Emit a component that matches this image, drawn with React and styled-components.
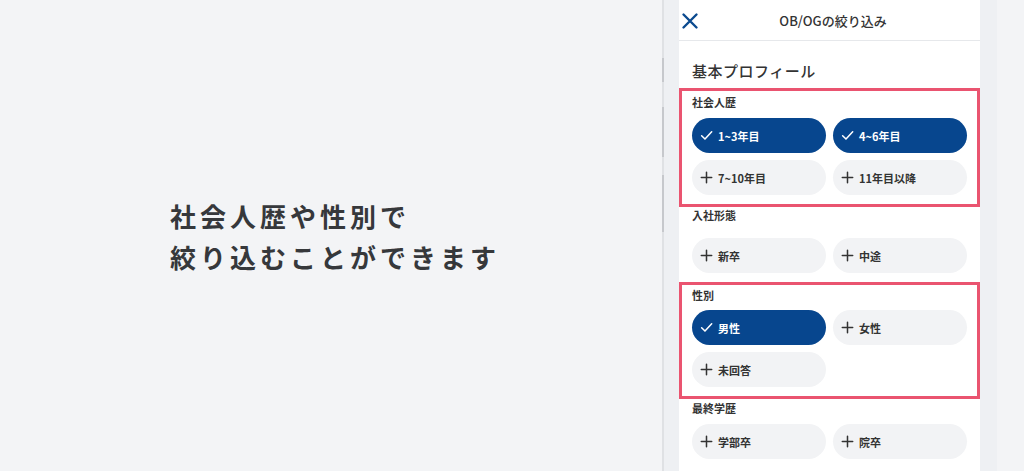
import React from 'react';
import styled, { createGlobalStyle } from 'styled-components';

const GlobalStyle = createGlobalStyle`
  html, body {
    margin: 0;
    padding: 0;
    background: #f3f4f6;
    font-family: "Noto Sans CJK JP", "Noto Sans", sans-serif;
  }
`

const Page = styled.div`
  display: flex;
  height: 471px;
  overflow: hidden;
  background: #f3f4f6;
`

const Intro = styled.div`
  width: 662px;
  box-sizing: border-box;
  padding-left: 170px;
  display: flex;
  align-items: center;
`

const Headline = styled.h1`
  margin: 0;
  font-size: 26px;
  font-weight: 700;
  line-height: 41px;
  letter-spacing: 4px;
  color: #36383b;
`

const Phone = styled.div`
  position: relative;
  width: 335px;
  box-sizing: border-box;
  height: 100%;
  padding: 0 16px 0 15px;
  background: #eef0f3;
  border-left: 2px solid #dfe1e4;
`

const SideButton = styled.span`
  position: absolute;
  left: -2px;
  width: 2px;
  background: #c6c8cc;
`

const Screen = styled.div`
  width: 301px;
  height: 100%;
  background: #fff;
`

const Header = styled.div`
  position: relative;
  height: 40px;
  display: flex;
  align-items: center;
  justify-content: center;
  border-bottom: 1px solid #e6e8eb;
`

const CloseButton = styled.button`
  position: absolute;
  left: 2px;
  top: 12px;
  width: 18px;
  height: 18px;
  padding: 0;
  border: none;
  background: none;
  display: flex;
`

const Title = styled.div`
  font-size: 13px;
  font-weight: 500;
  color: #333;
  padding-left: 7px;
`

const Body = styled.div`
  padding-top: 20px;
`

const GroupTitle = styled.div`
  padding: 0 13px;
  margin-bottom: 7px;
  font-size: 15px;
  line-height: 20px;
  font-weight: 500;
  color: #333;
  letter-spacing: 0.5px;
`

const Section = styled.div`
  padding: ${({ $top }) => $top}px 13px ${({ $bottom }) => $bottom}px;
  ${({ $boxed }) => $boxed && `
    box-shadow: inset 0 0 0 3px #ea5470;
  `}
`

const Label = styled.div`
  font-size: 11px;
  line-height: 14px;
  font-weight: 700;
  color: #333;
  margin-bottom: ${({ $gap }) => $gap}px;
`

const ChipGrid = styled.div`
  display: grid;
  grid-template-columns: 134px 134px;
  gap: 7px;
`

const Chip = styled.button`
  height: 35px;
  border: none;
  border-radius: 18px;
  padding: 0 0 0 8px;
  display: flex;
  align-items: center;
  gap: 5px;
  font-family: inherit;
  font-size: 11px;
  font-weight: 700;
  background: #f2f3f5;
  color: #333;
  ${({ $active }) => $active && `
    background: #07468e;
    color: #fff;
  `}
`

const CheckIcon = () => (
  <svg width="13" height="13" viewBox="0 0 12 12" fill="none">
    <polyline points="1.5,6.2 4.6,9.3 10.8,2.6" stroke="#fff" strokeWidth="1.4" strokeLinecap="round" strokeLinejoin="round" />
  </svg>
)

const PlusIcon = () => (
  <svg width="13" height="13" viewBox="0 0 12 12" fill="none">
    <path d="M6 1.2v9.6M1.2 6h9.6" stroke="#333" strokeWidth="1.4" strokeLinecap="round" />
  </svg>
)

const sections = [
  { label: '社会人歴', boxed: true, top: 7, bottom: 12, gap: 9,
    items: [['1~3年目', true], ['4~6年目', true], ['7~10年目', false], ['11年目以降', false]] },
  { label: '入社形態', boxed: false, top: 1, bottom: 9, gap: 16,
    items: [['新卒', false], ['中途', false]] },
  { label: '性別', boxed: true, top: 6, bottom: 12, gap: 8,
    items: [['男性', true], ['女性', false], ['未回答', false]] },
  { label: '最終学歴', boxed: false, top: 2, bottom: 9, gap: 9,
    items: [['学部卒', false], ['院卒', false]] },
]

export default function App(){
  return(
    <Page>
      <GlobalStyle />
      <Intro>
        <Headline>社会人歴や性別で<br />絞り込むことができます</Headline>
      </Intro>
      <Phone>
        <SideButton style={{ top: 58, height: 24 }} />
        <SideButton style={{ top: 107, height: 50 }} />
        <SideButton style={{ top: 175, height: 57 }} />
        <Screen>
          <Header>
            <CloseButton>
              <svg width="18" height="18" viewBox="0 0 18 18" fill="none">
                <path d="M2.5 2.5l13 13M15.5 2.5l-13 13" stroke="#0b4a8f" strokeWidth="2.4" strokeLinecap="round" />
              </svg>
            </CloseButton>
            <Title>OB/OGの絞り込み</Title>
          </Header>
          <Body>
            <GroupTitle>基本プロフィール</GroupTitle>
            {sections.map(s => (
              <Section key={s.label} $boxed={s.boxed} $top={s.top} $bottom={s.bottom}>
                <Label $gap={s.gap}>{s.label}</Label>
                <ChipGrid>
                  {s.items.map(([text, active]) => (
                    <Chip key={text} $active={active}>
                      {active ? <CheckIcon /> : <PlusIcon />}
                      {text}
                    </Chip>
                  ))}
                </ChipGrid>
              </Section>
            ))}
          </Body>
        </Screen>
      </Phone>
    </Page>
  )
}
